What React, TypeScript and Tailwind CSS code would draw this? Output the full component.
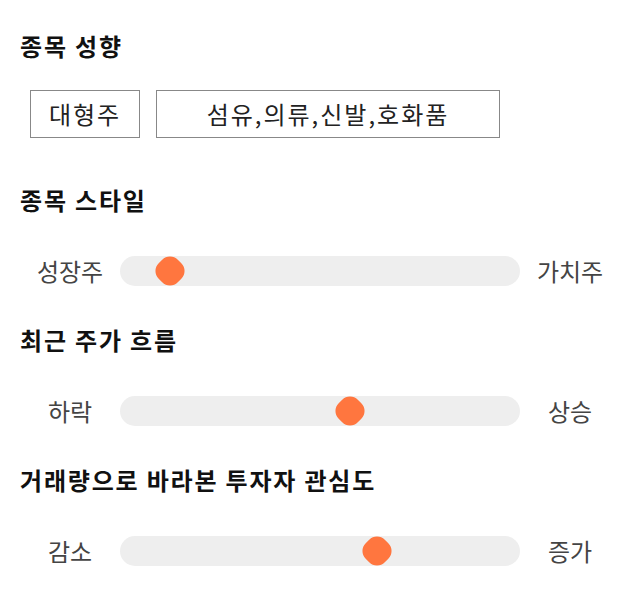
const font = { fontFamily: '"Noto Sans CJK KR", "Noto Sans", sans-serif' };

type SliderRowProps = { left: string; right: string; pos: number };

const SliderRow: React.FC<SliderRowProps> = ({ left, right, pos }) => (
  <div className="flex items-center px-[20px] h-[30px]">
    <span className="w-[100px] text-center text-[24px] leading-[30px] text-[#444]">{left}</span>
    <div className="relative flex-1 h-[30px] rounded-full bg-[#eeeeee]">
      <div
        className="absolute top-1/2 w-[27px] h-[27px] -translate-x-1/2 -translate-y-1/2 rotate-45 rounded-[11px] bg-[#ff763f]"
        style={{ left: `${pos}%` }}
      />
    </div>
    <span className="w-[100px] text-center text-[24px] leading-[30px] text-[#444]">{right}</span>
  </div>
);

const SectionTitle: React.FC<{ children: React.ReactNode }> = ({ children }) => (
  <h2 className="pl-[20px] text-[24px] font-bold tracking-[1.8px] text-[#111] leading-[30px]">{children}</h2>
);

export default function App() {
  return (
    <div className="w-[640px] h-[606px] bg-white" style={font}>
      <div className="pt-[31px]">
        <SectionTitle>종목 성향</SectionTitle>
        <div className="flex gap-[16px] pl-[30px] mt-[29px]">
          <div className="w-[110px] h-[48px] flex items-center justify-center border border-[#888] text-[24px] tracking-[2px] text-[#222]">
            대형주
          </div>
          <div className="w-[344px] h-[48px] flex items-center justify-center border border-[#888] text-[24px] tracking-[2px] text-[#222]">
            섬유,의류,신발,호화품
          </div>
        </div>
      </div>

      <div className="mt-[47px]">
        <SectionTitle>종목 스타일</SectionTitle>
        <div className="mt-[41px]">
          <SliderRow left="성장주" right="가치주" pos={12.5} />
        </div>
      </div>

      <div className="mt-[39px]">
        <SectionTitle>최근 주가 흐름</SectionTitle>
        <div className="mt-[41px]">
          <SliderRow left="하락" right="상승" pos={57.5} />
        </div>
      </div>

      <div className="mt-[39px]">
        <SectionTitle>거래량으로 바라본 투자자 관심도</SectionTitle>
        <div className="mt-[41px]">
          <SliderRow left="감소" right="증가" pos={64.2} />
        </div>
      </div>
    </div>
  );
}
